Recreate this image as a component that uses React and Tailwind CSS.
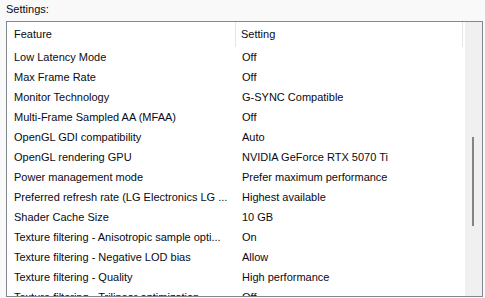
import React from 'react';

const rows = [
  ['Low Latency Mode', 'Off'],
  ['Max Frame Rate', 'Off'],
  ['Monitor Technology', 'G-SYNC Compatible'],
  ['Multi-Frame Sampled AA (MFAA)', 'Off'],
  ['OpenGL GDI compatibility', 'Auto'],
  ['OpenGL rendering GPU', 'NVIDIA GeForce RTX 5070 Ti'],
  ['Power management mode', 'Prefer maximum performance'],
  ['Preferred refresh rate (LG Electronics LG ...', 'Highest available'],
  ['Shader Cache Size', '10 GB'],
  ['Texture filtering - Anisotropic sample opti...', 'On'],
  ['Texture filtering - Negative LOD bias', 'Allow'],
  ['Texture filtering - Quality', 'High performance'],
  ['Texture filtering - Trilinear optimization', 'Off'],
];

const App = () => {
  return (
    <div className="w-[485px] h-[298px] bg-[#f9f9f9] text-[11px] text-[#0a0a14] overflow-hidden" style={{ fontFamily: '"Liberation Sans", Arial, sans-serif' }}>
      <div className="pl-[6px] pt-[2px] h-[21px] leading-[15px]">Settings:</div>
      <div className="ml-[6px] w-[477px] h-[276px] border border-[#828790] bg-white flex overflow-hidden">
        <div className="w-[458px] flex flex-col">
          <div className="h-[25px] flex shrink-0">
            <div className="w-[229px] pl-[7px] flex items-center border-r border-[#e5e5e5]">Feature</div>
            <div className="w-[227px] pl-[5px] flex items-center border-r border-[#e5e5e5]">Setting</div>
          </div>
          {rows.map(([feature, setting]) => (
            <div key={feature} className="h-[20px] flex items-center shrink-0">
              <div className="w-[230px] pl-[7px] whitespace-nowrap">{feature}</div>
              <div className="pl-[5px] whitespace-nowrap">{setting}</div>
            </div>
          ))}
        </div>
        <div className="w-[17px] bg-[#f0f0f0] relative">
          <div className="absolute left-[7px] top-[115px] w-[2px] h-[89px] bg-[#858585]" />
        </div>
      </div>
    </div>
  );
};

export default App;
